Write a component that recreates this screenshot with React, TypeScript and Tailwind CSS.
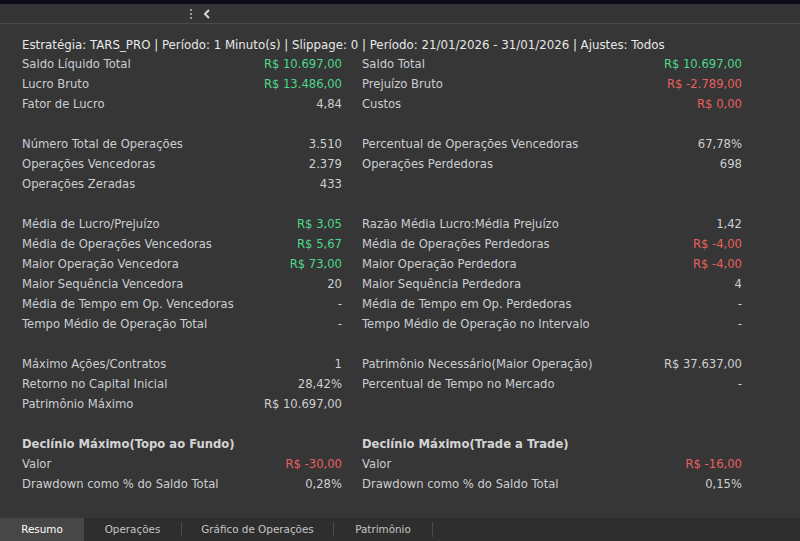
import React from "react";

type Cell = { label: string; value?: string; color?: "g" | "r" | "n" };
type Row = { l?: Cell; r?: Cell; bold?: boolean } | null;

const G = "g", R = "r";

const rows: Row[] = [
  { l: { label: "Saldo Líquido Total", value: "R$ 10.697,00", color: G }, r: { label: "Saldo Total", value: "R$ 10.697,00", color: G } },
  { l: { label: "Lucro Bruto", value: "R$ 13.486,00", color: G }, r: { label: "Prejuízo Bruto", value: "R$ -2.789,00", color: R } },
  { l: { label: "Fator de Lucro", value: "4,84" }, r: { label: "Custos", value: "R$ 0,00", color: R } },
  null,
  { l: { label: "Número Total de Operações", value: "3.510" }, r: { label: "Percentual de Operações Vencedoras", value: "67,78%" } },
  { l: { label: "Operações Vencedoras", value: "2.379" }, r: { label: "Operações Perdedoras", value: "698" } },
  { l: { label: "Operações Zeradas", value: "433" } },
  null,
  { l: { label: "Média de Lucro/Prejuízo", value: "R$ 3,05", color: G }, r: { label: "Razão Média Lucro:Média Prejuízo", value: "1,42" } },
  { l: { label: "Média de Operações Vencedoras", value: "R$ 5,67", color: G }, r: { label: "Média de Operações Perdedoras", value: "R$ -4,00", color: R } },
  { l: { label: "Maior Operação Vencedora", value: "R$ 73,00", color: G }, r: { label: "Maior Operação Perdedora", value: "R$ -4,00", color: R } },
  { l: { label: "Maior Sequência Vencedora", value: "20" }, r: { label: "Maior Sequência Perdedora", value: "4" } },
  { l: { label: "Média de Tempo em Op. Vencedoras", value: "-" }, r: { label: "Média de Tempo em Op. Perdedoras", value: "-" } },
  { l: { label: "Tempo Médio de Operação Total", value: "-" }, r: { label: "Tempo Médio de Operação no Intervalo", value: "-" } },
  null,
  { l: { label: "Máximo Ações/Contratos", value: "1" }, r: { label: "Patrimônio Necessário(Maior Operação)", value: "R$ 37.637,00" } },
  { l: { label: "Retorno no Capital Inicial", value: "28,42%" }, r: { label: "Percentual de Tempo no Mercado", value: "-" } },
  { l: { label: "Patrimônio Máximo", value: "R$ 10.697,00" } },
  null,
  { bold: true, l: { label: "Declínio Máximo(Topo ao Fundo)" }, r: { label: "Declínio Máximo(Trade a Trade)" } },
  { l: { label: "Valor", value: "R$ -30,00", color: R }, r: { label: "Valor", value: "R$ -16,00", color: R } },
  { l: { label: "Drawdown como % do Saldo Total", value: "0,28%" }, r: { label: "Drawdown como % do Saldo Total", value: "0,15%" } },
];

function CellView({ c, bold, right }: { c?: Cell; bold?: boolean; right?: boolean }) {
  const w = right ? "w-[380px]" : "w-[320px]";
  if (!c) return <div className={w} />;
  const vc = c.color === "g" ? "text-[#4cd98a]" : c.color === "r" ? "text-[#e8605e]" : "text-[#cdcfd1]";
  return (
    <div className={`${w} flex justify-between items-center whitespace-nowrap`}>
      <span className={bold ? "font-bold text-[#d4d4d4]" : "text-[#cbced1]"}>{c.label}</span>
      {c.value !== undefined && <span className={vc}>{c.value}</span>}
    </div>
  );
}

export default function App() {
  return (
    <div
      className="w-[800px] h-[541px] bg-[#363636] flex flex-col overflow-hidden text-[11.6px]"
      style={{ fontFamily: "'DejaVu Sans', Verdana, sans-serif" }}
    >
      <div className="h-[4px] bg-[#0c0b18]" />
      <div className="h-[20px] bg-[#353535] border-b border-[#4a4a4a] flex items-center gap-[10px] pl-[189px]">
        <svg width="4" height="12" viewBox="0 0 4 12">
          <rect x="1" y="1" width="2" height="2" fill="#9a9a9a" />
          <rect x="1" y="5" width="2" height="2" fill="#9a9a9a" />
          <rect x="1" y="9" width="2" height="2" fill="#9a9a9a" />
        </svg>
        <svg width="8" height="10" viewBox="0 0 8 10">
          <path d="M6 1 L2 5 L6 9" stroke="#d8d8d8" strokeWidth="2" fill="none" />
        </svg>
      </div>
      <div className="flex-1 pl-[22px] pt-[13px]">
        <div className="h-[18px] flex items-center text-[#e8e8e8] whitespace-nowrap text-[11.8px]">
          Estratégia: TARS_PRO | Período: 1 Minuto(s) | Slippage: 0 | Período: 21/01/2026 - 31/01/2026 | Ajustes: Todos
        </div>
        {rows.map((r, i) =>
          r === null ? (
            <div key={i} className="h-[20px]" />
          ) : (
            <div key={i} className="h-[20px] flex gap-[20px]">
              <CellView c={r.l} bold={r.bold} />
              <CellView c={r.r} bold={r.bold} right />
            </div>
          )
        )}
      </div>
      <div className="h-[23px] bg-[#2e2e2e] flex items-stretch text-[#c4c4c4] text-[10.4px]">
        <div className="w-[84px] bg-[#474747] flex items-center justify-center text-white">Resumo</div>
        <div className="w-[97px] flex items-center justify-center">Operações</div>
        <div className="w-px my-[4px] bg-[#4a4a4a]" />
        <div className="w-[151px] flex items-center justify-center">Gráfico de Operações</div>
        <div className="w-px my-[4px] bg-[#4a4a4a]" />
        <div className="w-[98px] flex items-center justify-center">Patrimônio</div>
        <div className="w-px my-[4px] bg-[#4a4a4a]" />
      </div>
    </div>
  );
}
